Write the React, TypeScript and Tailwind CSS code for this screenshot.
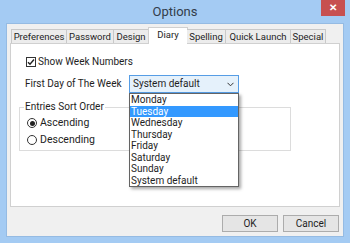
import React from "react";

const tabs = [
  { label: "Preferences", w: "w-[56px]" },
  { label: "Password", w: "w-[47px]" },
  { label: "Design", w: "w-[35px]" },
  { label: "Diary", w: "w-[40px]", active: true },
  { label: "Spelling", w: "w-[39px]" },
  { label: "Quick Launch", w: "w-[65px]" },
  { label: "Special", w: "w-[35px]" },
];

const days = ["Monday", "Tuesday", "Wednesday", "Thursday", "Friday", "Saturday", "Sunday", "System default"];

export default function App() {
  return (
    <div
      className="w-[350px] h-[243px] bg-[#a4cbf3] flex flex-col text-[10px] leading-[12px] text-[#1e1e1e] overflow-hidden"
      style={{ fontFamily: 'Roboto, "Noto Sans", sans-serif' }}
    >
      {/* title bar */}
      <div className="h-[23px] relative flex items-center justify-center shrink-0">
        <span className="text-[13px] leading-[16px] text-[#333d4a]">Options</span>
        <div className="absolute right-[5px] top-0 w-[24px] h-[16px] bg-[#c75050] flex items-center justify-center">
          <span className="text-white text-[10px] font-bold leading-none">✕</span>
        </div>
      </div>

      {/* body */}
      <div className="mx-[6px] mb-[6px] flex-1 bg-[#f0f0f0] flex flex-col border border-[#95bbe3]">
        {/* tab row */}
        <div className="flex items-end h-[16px] pl-[4px] mt-[3px] relative z-10 text-[9.5px]">
          {tabs.map((t) =>
            t.active ? (
              <div
                key={t.label}
                className={`${t.w} h-[17px] bg-white border border-[#d0d0d0] border-b-0 -mb-[1px] flex items-start justify-center pt-[1px] -mx-[1px]`}
              >
                {t.label}
              </div>
            ) : (
              <div
                key={t.label}
                className={`${t.w} h-[14px] bg-[#ececec] border border-[#c9c9c9] border-b-0 border-l-0 first:border-l flex items-center justify-center`}
              >
                {t.label}
              </div>
            )
          )}
        </div>

        {/* panel */}
        <div className="mx-[3px] h-[164px] bg-white border border-[#d0d0d0] flex flex-col pl-[14px] pt-[12px] relative">
          <div className="h-[12px] flex items-center gap-[2px] ml-[1px]">
            <div className="w-[10px] h-[10px] border border-[#333] bg-white flex items-center justify-center">
              <svg width="8" height="8" viewBox="0 0 8 8">
                <path d="M1 4.2 L3 6.3 L7 1.5" fill="none" stroke="#222" strokeWidth="1.4" />
              </svg>
            </div>
            <span>Show Week Numbers</span>
          </div>

          <div className="flex items-center mt-[7px]">
            <span className="w-[104px]">First Day of The Week</span>
            <div className="relative">
              <div className="w-[110px] h-[18px] border border-[#569de5] bg-[#e5f1fb] flex items-center justify-between pl-[3px] pr-[4px]">
                <span>System default</span>
                <svg width="7" height="5" viewBox="0 0 7 5">
                  <path d="M0.5 0.8 L3.5 3.8 L6.5 0.8" fill="none" stroke="#333" strokeWidth="1" />
                </svg>
              </div>
              <div className="absolute left-0 top-[18px] w-[110px] bg-white border border-[#646464] shadow-[2px_2px_3px_rgba(0,0,0,0.35)] flex flex-col z-20">
                {days.map((d) => (
                  <div
                    key={d}
                    className={`h-[11.5px] leading-[11.5px] pl-[1px] ${d === "Tuesday" ? "bg-[#3399ff] text-white" : ""}`}
                  >
                    {d}
                  </div>
                ))}
              </div>
            </div>
          </div>

          <div className="relative mt-[14px] ml-[-6px] w-[272px] h-[44px] border border-[#dcdcdc] flex flex-col pl-[7px] pt-[9px] gap-[5px]">
            <span className="absolute -top-[7px] left-[4px] bg-white px-[1px]">Entries Sort Order</span>
            <div className="h-[12px] flex items-center gap-[3px]">
              <div className="w-[10px] h-[10px] rounded-full border border-[#333] bg-white flex items-center justify-center">
                <div className="w-[5px] h-[5px] rounded-full bg-[#222]" />
              </div>
              <span className="text-[10.5px]">Ascending</span>
            </div>
            <div className="h-[12px] flex items-center gap-[3px]">
              <div className="w-[10px] h-[10px] rounded-full border border-[#333] bg-white" />
              <span className="text-[10.5px]">Descending</span>
            </div>
          </div>
        </div>

        {/* buttons */}
        <div className="flex justify-end gap-[5px] pr-[4px] mt-[8px]">
          <button className="w-[56px] h-[17px] border border-[#acacac] bg-[#e5e5e5] text-[10px] leading-none">OK</button>
          <button className="w-[56px] h-[17px] border border-[#acacac] bg-[#e5e5e5] text-[10px] leading-none">Cancel</button>
        </div>
      </div>
    </div>
  );
}
